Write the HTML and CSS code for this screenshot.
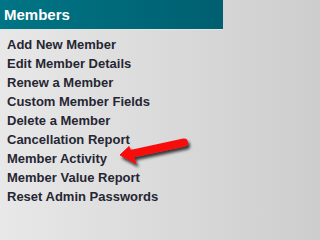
FILE: index.html
```html
<!DOCTYPE html>
<html>
<head>
<meta charset="utf-8">
<link rel="stylesheet" href="styles.css">
</head>
<body>
<div class="panel">
  <div class="panel-head">Members</div>
  <ul class="menu">
    <li>Add New Member</li>
    <li>Edit Member Details</li>
    <li>Renew a Member</li>
    <li>Custom Member Fields</li>
    <li>Delete a Member</li>
    <li>Cancellation Report</li>
    <li>Member Activity</li>
    <li>Member Value Report</li>
    <li>Reset Admin Passwords</li>
  </ul>
  <svg class="arrow" width="80" height="40" viewBox="0 0 80 40">
    <defs>
      <filter id="sh" x="-20%" y="-40%" width="140%" height="180%">
        <feDropShadow dx="2" dy="3" stdDeviation="1.4" flood-color="#000" flood-opacity="0.75"/>
      </filter>
    </defs>
    <g filter="url(#sh)" fill="#f81010" stroke="#f81010">
      <line x1="69" y1="10.5" x2="16" y2="21.8" stroke-width="8" stroke-linecap="round"/>
      <polygon points="5,23 14,14.5 21,31.5" stroke-width="1" stroke-linejoin="round"/>
    </g>
  </svg>
</div>
</body>
</html>
```

FILE: styles.css
```css
html, body {
  margin: 0;
  padding: 0;
}
body {
  width: 223px;
  height: 213px;
  overflow: hidden;
  background: linear-gradient(to right, #e8e8e8, #cdcdcd);
  font-family: "Liberation Sans", Arial, sans-serif;
}
.panel {
  position: relative;
  width: 223px;
  height: 213px;
}
.panel-head {
  height: 29px;
  line-height: 29px;
  padding-left: 4px;
  background: linear-gradient(to right, #007585, #005f70);
  color: #ffffff;
  font-weight: bold;
  font-size: 15px;
  border-bottom: 1px solid #e4e4e4;
}
.menu {
  list-style: none;
  margin: 0;
  padding: 5px 0 0 7px;
}
.menu li {
  font-size: 13px;
  font-weight: bold;
  line-height: 19px;
  color: #262633;
}
.arrow {
  position: absolute;
  left: 115px;
  top: 132px;
}
```
